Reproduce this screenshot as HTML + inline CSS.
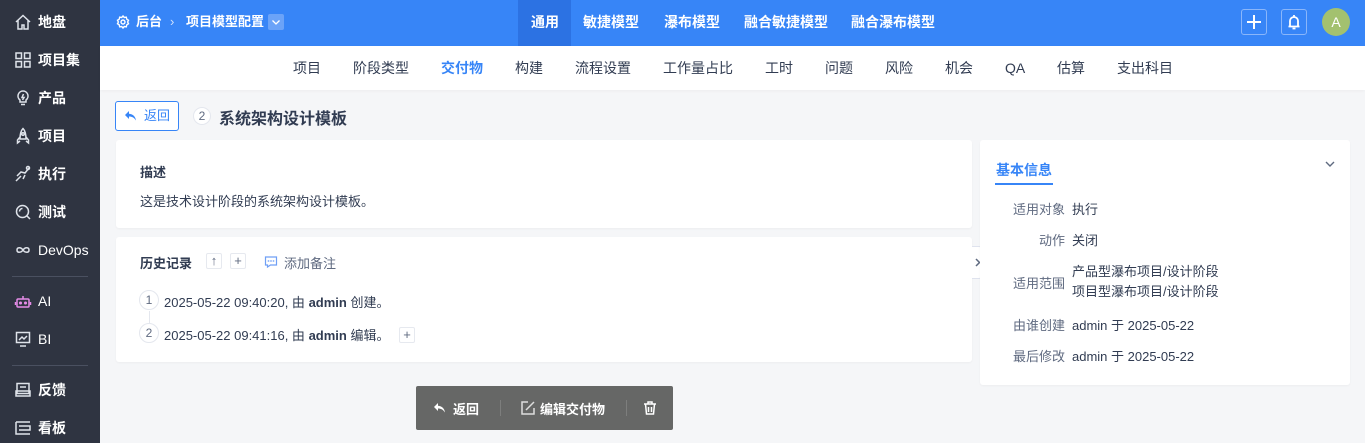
<!DOCTYPE html>
<html><head><meta charset="utf-8">
<style>
*{box-sizing:border-box;margin:0;padding:0}
body{width:1365px;height:443px;overflow:hidden;font-family:"Liberation Sans","Noto Sans CJK SC",sans-serif;font-size:13px;color:#313c52;background:#f5f6f8;position:relative}
.abs{position:absolute}
#side{left:0;top:0;width:100px;height:443px;background:#2f3441;color:#fff}
.si{position:absolute;left:14px;height:20px;display:flex;align-items:center;font-size:14px;font-weight:bold;color:#fff}
.si svg{width:18px;height:18px;margin-right:6px;fill:none;stroke:#dfe3ea;stroke-width:1.5}
.sep{position:absolute;left:12px;width:76px;height:1px;background:#4a5060}
#top{left:100px;top:0;width:1265px;height:46px;background:#3785f7;color:#fff}
.tn{position:absolute;top:0;height:46px;line-height:44px;font-size:14px;font-weight:bold;color:#fff}
#sub{left:100px;top:46px;width:1265px;height:44px;background:#fff;box-shadow:0 1px 3px rgba(0,0,0,.04)}
.st{position:absolute;top:0;line-height:44px;font-size:14px;color:#313c52}
.card{position:absolute;background:#fff;border-radius:3px;box-shadow:0 1px 2px rgba(0,0,0,.04)}
.lab{position:absolute;left:0;width:85px;text-align:right;color:#5f6a80}
.val{position:absolute;left:92px;color:#313c52}
.circ{position:absolute;width:20px;height:20px;border:1px solid #e4e7ee;border-radius:50%;display:flex;align-items:center;justify-content:center;font-size:12px;color:#5f6a80;background:#fff}
.sq{position:absolute;width:16px;height:16px;border:1px solid #e6e9ef;border-radius:2px;text-align:center;line-height:13px;font-size:13px;color:#5f6a80}
</style></head><body>
<div id="side" class="abs">
 <div class="si" style="top:12px"><svg viewBox="0 0 18 18"><path d="M2 9L9 2.5 16 9M4 7.5V16h4v-4h2v4h4V7.5"/></svg>地盘</div>
 <div class="si" style="top:50px"><svg viewBox="0 0 18 18"><rect x="2" y="2" width="5.5" height="5.5"/><rect x="10.5" y="2" width="5.5" height="5.5"/><rect x="2" y="10.5" width="5.5" height="5.5"/><rect x="10.5" y="10.5" width="5.5" height="5.5"/></svg>项目集</div>
 <div class="si" style="top:88px"><svg viewBox="0 0 18 18"><path d="M9 2a5 5 0 0 0-3 9v2h6v-2a5 5 0 0 0-3-9zM7 15.5h4M9.5 5L8 8.5h2L8.5 11"/></svg>产品</div>
 <div class="si" style="top:126px"><svg viewBox="0 0 18 18"><path d="M9 1.5C6.5 4 6 8 6 12h6c0-4-.5-8-3-10.5zM6 10l-2.5 3v3L6 14M12 10l2.5 3v3L12 14"/><circle cx="9" cy="7" r="1.3"/></svg>项目</div>
 <div class="si" style="top:164px"><svg viewBox="0 0 18 18"><path d="M2 16l5-5M3 11l4-4 4 1 4-5M9 14l2-4"/><circle cx="14" cy="3" r="1.5"/></svg>执行</div>
 <div class="si" style="top:202px"><svg viewBox="0 0 18 18"><circle cx="8.5" cy="8.5" r="6"/><path d="M13 13l3 3M5.5 8.5a3 3 0 0 1 3-3"/></svg>测试</div>
 <div class="si" style="top:240px;font-weight:normal"><svg viewBox="0 0 18 18"><path d="M9 9c-2-3-6-3-6 0s4 3 6 0 6-3 6 0-4 3-6 0z"/></svg>DevOps</div>
 <div class="sep" style="top:276px"></div>
 <div class="si" style="top:291px;font-weight:normal"><svg viewBox="0 0 18 18" style="stroke:#e68be8"><rect x="3" y="7" width="12" height="8" rx="1"/><path d="M9 7V4M1.5 10v3M16.5 10v3"/><circle cx="6.5" cy="11" r=".8"/><circle cx="11.5" cy="11" r=".8"/></svg>AI</div>
 <div class="si" style="top:329px;font-weight:normal"><svg viewBox="0 0 18 18"><rect x="2.5" y="2.5" width="13" height="10"/><path d="M5 10l3-3 2 2 3-3M6 16h6"/></svg>BI</div>
 <div class="sep" style="top:365px"></div>
 <div class="si" style="top:380px"><svg viewBox="0 0 18 18"><rect x="3" y="2.5" width="12" height="10"/><path d="M2 10h14v5H2zM6 6h6"/></svg>反馈</div>
 <div class="si" style="top:418px"><svg viewBox="0 0 18 18"><path d="M2 3h14M2 3v12h14M5 7h11v4H5"/></svg>看板</div>
</div>
<div id="top" class="abs">
 <svg class="abs" style="left:16px;top:15px" width="14" height="14" viewBox="0 0 14 14" fill="none" stroke="#fff" stroke-width="1.4"><circle cx="7" cy="7" r="2"/><path d="M7 1l1.3 1.5 2-.3.5 2 1.7 1.1-.9 1.7.9 1.7-1.7 1.1-.5 2-2-.3L7 13l-1.3-1.5-2 .3-.5-2L1.5 8.7l.9-1.7-.9-1.7 1.7-1.1.5-2 2 .3z"/></svg>
 <div class="tn" style="left:36px;font-size:13px">后台</div>
 <div class="tn" style="left:70px;font-weight:normal;color:#cfe0fd;font-size:13px">›</div>
 <div class="tn" style="left:86px;font-size:13px">项目模型配置</div>
 <div class="abs" style="left:168px;top:14px;width:16px;height:16px;background:#6ba3f8;border-radius:2px"><svg width="16" height="16" viewBox="0 0 16 16" fill="none" stroke="#fff" stroke-width="1.3"><path d="M4.5 6.5L8 10l3.5-3.5"/></svg></div>
 <div class="abs" style="left:418px;top:0;width:53px;height:46px;background:#2c72e3"></div>
 <div class="tn" style="left:431px">通用</div>
 <div class="tn" style="left:483px">敏捷模型</div>
 <div class="tn" style="left:564px">瀑布模型</div>
 <div class="tn" style="left:644px">融合敏捷模型</div>
 <div class="tn" style="left:751px">融合瀑布模型</div>
 <div class="abs" style="left:1141px;top:9px;width:26px;height:26px;border:1px solid #8ab6fa;border-radius:3px"><svg width="24" height="24" viewBox="0 0 24 24" stroke="#fff" stroke-width="2"><path d="M12 5v14M5 12h14"/></svg></div>
 <div class="abs" style="left:1181px;top:9px;width:26px;height:26px;border:1px solid #8ab6fa;border-radius:3px"><svg width="24" height="24" viewBox="0 0 24 24" fill="none" stroke="#fff" stroke-width="1.8"><path d="M8 16V11a4 4 0 0 1 8 0v5M6.5 16.5h11M12 5v1.5M10.5 18.5h3"/></svg></div>
 <div class="abs" style="left:1222px;top:8px;width:28px;height:28px;border-radius:50%;background:#a3c16f;color:#fff;text-align:center;line-height:28px;font-size:14px">A</div>
</div>
<div id="sub" class="abs">
 <div class="st" style="left:193px">项目</div>
 <div class="st" style="left:253px">阶段类型</div>
 <div class="st" style="left:341px;color:#3785f7;font-weight:bold">交付物</div>
 <div class="st" style="left:415px">构建</div>
 <div class="st" style="left:475px">流程设置</div>
 <div class="st" style="left:563px">工作量占比</div>
 <div class="st" style="left:665px">工时</div>
 <div class="st" style="left:725px">问题</div>
 <div class="st" style="left:785px">风险</div>
 <div class="st" style="left:845px">机会</div>
 <div class="st" style="left:905px">QA</div>
 <div class="st" style="left:957px">估算</div>
 <div class="st" style="left:1017px">支出科目</div>
</div>
<div class="abs" style="left:115px;top:101px;width:64px;height:30px;border:1px solid #3785f7;border-radius:3px;background:#fff;color:#3785f7;font-size:13px;line-height:28px;padding-left:28px">返回
 <svg class="abs" style="left:8px;top:7px" width="14" height="14" viewBox="0 0 14 14" fill="#3785f7"><path d="M5 2L1 6l4 4V7.5c3 0 5 1 7 4-0.5-4-3-6.5-7-6.8z"/></svg></div>
<div class="circ" style="left:193px;top:107px;width:18px;height:18px">2</div>
<div class="abs" style="left:219px;top:105px;font-size:16px;font-weight:bold;color:#313c52">系统架构设计模板</div>

<div class="card" style="left:116px;top:140px;width:856px;height:88px">
 <div class="abs" style="left:24px;top:22px;font-weight:bold;font-size:13px">描述</div>
 <div class="abs" style="left:24px;top:51px;font-size:13px">这是技术设计阶段的系统架构设计模板。</div>
</div>
<div class="card" style="left:116px;top:237px;width:856px;height:125px">
 <div class="abs" style="left:24px;top:16px;font-weight:bold">历史记录</div>
 <div class="sq" style="left:90px;top:16px">↑</div>
 <div class="sq" style="left:114px;top:16px">+</div>
 <svg class="abs" style="left:148px;top:18px" width="14" height="14" viewBox="0 0 14 14" fill="none" stroke="#6f9ff5" stroke-width="1.2"><path d="M1.5 2h11v8h-6l-3 2v-2h-2z"/><circle cx="4.5" cy="6" r=".3"/><circle cx="7" cy="6" r=".3"/><circle cx="9.5" cy="6" r=".3"/></svg>
 <div class="abs" style="left:168px;top:16px;color:#5f6a80">添加备注</div>
 <div class="abs" style="left:33px;top:74px;width:1px;height:22px;background:#e4e7ee"></div>
 <div class="circ" style="left:23px;top:53px">1</div>
 <div class="abs" style="left:48px;top:55px">2025-05-22 09:40:20, 由 <b>admin</b> 创建。</div>
 <div class="circ" style="left:23px;top:86px">2</div>
 <div class="abs" style="left:48px;top:88px">2025-05-22 09:41:16, 由 <b>admin</b> 编辑。</div>
 <div class="sq" style="left:283px;top:90px">+</div>
</div>
<div class="abs" style="left:972px;top:246px;width:13px;height:33px;background:#fff;border:1px solid #dfe3ee;border-left:none;border-radius:0 6px 6px 0"><svg width="12" height="31" viewBox="0 0 12 31" fill="none" stroke="#5f6a80" stroke-width="1.5"><path d="M4 12l3.5 3.5L4 19"/></svg></div>
<div class="card" style="left:980px;top:140px;width:370px;height:245px">
 <div class="abs" style="left:16px;top:20px;font-weight:bold;color:#3785f7;font-size:14px">基本信息</div>
 <div class="abs" style="left:15px;top:43px;width:58px;height:2px;background:#3785f7"></div>
 <svg class="abs" style="left:343px;top:17px" width="14" height="14" viewBox="0 0 14 14" fill="none" stroke="#5f6a80" stroke-width="1.4"><path d="M3 5l4 4 4-4"/></svg>
 <div style="position:absolute;left:0;top:59px;width:370px">
  <div class="lab" style="top:0">适用对象</div><div class="val" style="top:0">执行</div>
  <div class="lab" style="top:31px">动作</div><div class="val" style="top:31px">关闭</div>
  <div class="lab" style="top:74px">适用范围</div><div class="val" style="top:63px;line-height:20px">产品型瀑布项目/设计阶段<br>项目型瀑布项目/设计阶段</div>
  <div class="lab" style="top:116px">由谁创建</div><div class="val" style="top:116px">admin 于 2025-05-22</div>
  <div class="lab" style="top:147px">最后修改</div><div class="val" style="top:147px">admin 于 2025-05-22</div>
 </div>
</div>
<div class="abs" style="left:416px;top:386px;width:257px;height:44px;background:#666766;border-radius:2px;color:#fff;font-weight:bold;font-size:13px">
 <svg class="abs" style="left:17px;top:15px" width="14" height="14" viewBox="0 0 14 14" fill="#fff"><path d="M5 2L1 6l4 4V7.5c3 0 5 1 7 4-0.5-4-3-6.5-7-6.8z"/></svg>
 <div class="abs" style="left:37px;top:13px">返回</div>
 <div class="abs" style="left:84px;top:14px;width:1px;height:16px;background:#7d7e7d"></div>
 <svg class="abs" style="left:104px;top:14px" width="16" height="16" viewBox="0 0 16 16" fill="none" stroke="#ddd" stroke-width="1.5"><path d="M8 2H2v12h12V8M6 10l8-8"/></svg>
 <div class="abs" style="left:124px;top:13px">编辑交付物</div>
 <div class="abs" style="left:210px;top:14px;width:1px;height:16px;background:#7d7e7d"></div>
 <svg class="abs" style="left:226px;top:14px" width="16" height="16" viewBox="0 0 16 16" fill="none" stroke="#fff" stroke-width="1.5"><path d="M2 4h12M6 4V2h4v2M3.5 4l1 10h7l1-10M6.5 7v5M9.5 7v5"/></svg>
</div>
</body></html>
